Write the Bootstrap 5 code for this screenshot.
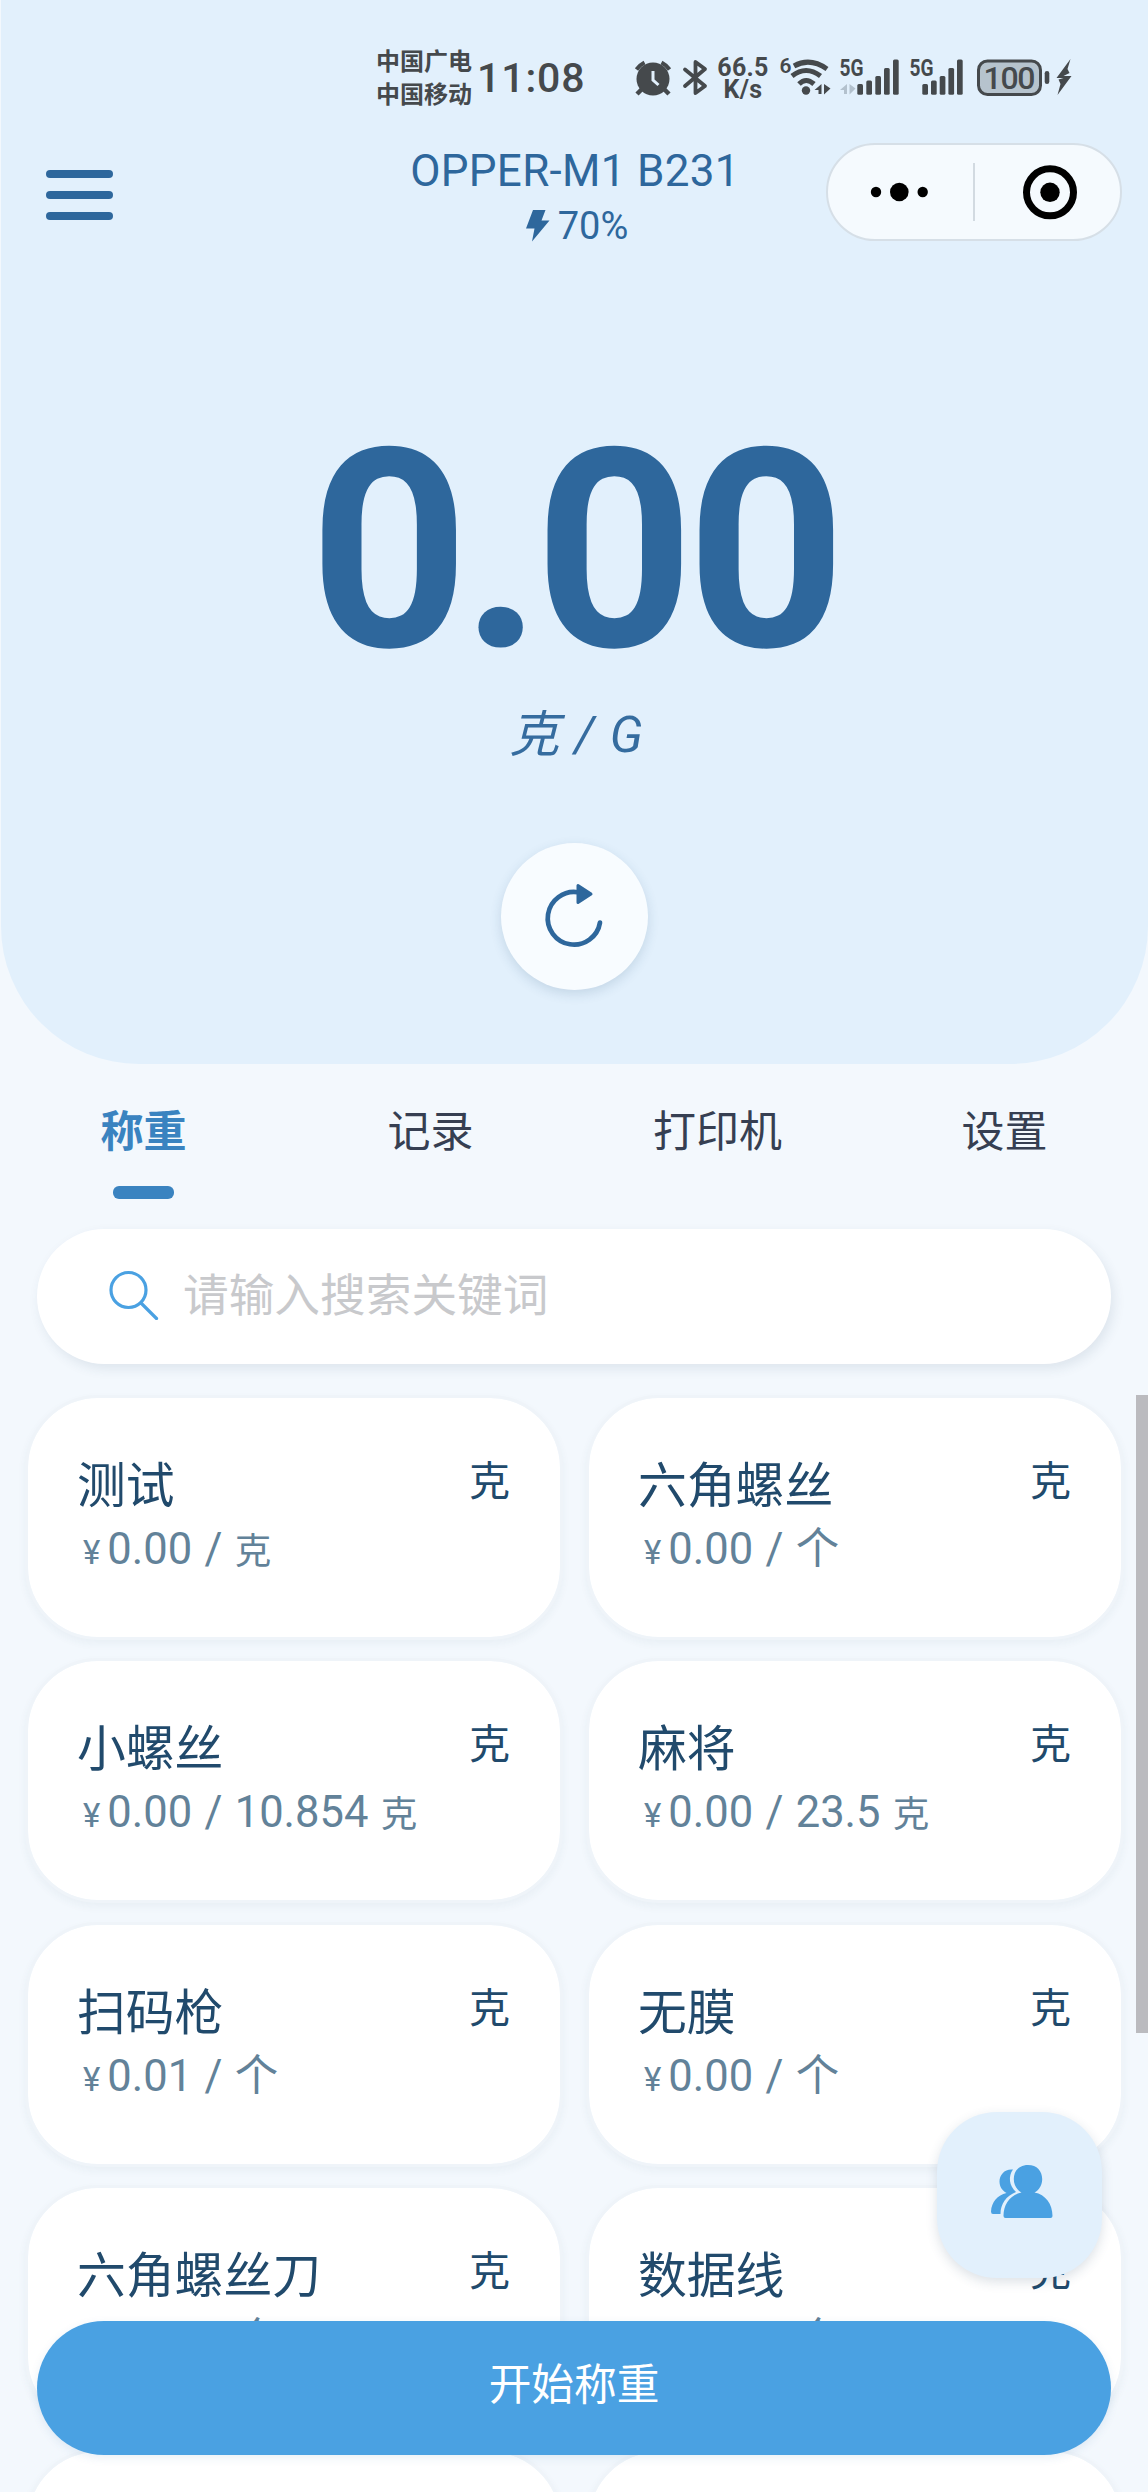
<!DOCTYPE html>
<html lang="zh-CN">
<head>
<meta charset="utf-8">
<meta name="viewport" content="width=device-width, initial-scale=1">
<title>OPPER-M1 B231</title>
<link href="https://cdn.jsdelivr.net/npm/bootstrap@5.3.0/dist/css/bootstrap.min.css" rel="stylesheet">
<style>
body{background:#f3f8fd;font-family:Roboto,"Noto Sans CJK SC",sans-serif;color:#214a6c}
svg{display:block;flex:none}
.screen{width:1148px;height:2492px}
.hero{height:1064px;margin-left:1px;background:#e2f0fc;border-radius:0 0 138px 138px;color:#2e679c}
/* system status bar */
.status{height:130px;padding:44px 0 0 375px;color:#45494c}
.carriers{font:700 24px/33px "Noto Sans CJK SC",sans-serif;width:96px;margin-top:-1px}
.clock{font-size:41px;line-height:68px;font-weight:500;margin-left:5px;width:108px;letter-spacing:.9px}
.speed{font-size:25px;line-height:22px;font-weight:700;width:56px;margin-left:7px;padding-top:13px;letter-spacing:.3px}
.status text{font-family:Roboto,sans-serif;fill:#45494c}
.sys-left{margin-left:49px}
.sys-right{margin-left:7px}
/* title bar */
.topbar{height:130px}
.menu-btn{width:67px;height:50px;margin:40px 0 0 45px}
.menu-btn span{height:8px;border-radius:4px;background:#2e679c}
.device{width:330px;margin-left:297px;padding-top:15px}
.device-name{font-size:44px;line-height:52px;white-space:nowrap;letter-spacing:.3px}
.battery{font-size:38px;line-height:48px;margin-top:5px;padding-left:4px}
.capsule{width:296px;height:98px;margin:13px 0 0 86px;background:#f5fafe;border:2px solid #d6dfe7;border-radius:49px}
/* reading */
.reading{font-size:278px;line-height:300px;font-weight:700;margin-top:141px;white-space:nowrap;letter-spacing:-7.5px;padding-right:1px}
.unit{font-size:50px;line-height:60px;font-style:italic;margin-top:4px;color:#356c9f;word-spacing:3px;padding-left:3px}
.tare{width:147px;height:147px;background:#f8fcff;box-shadow:0 4px 12px rgba(40,80,120,.16);margin-top:78px}
/* tabs */
.tabs{height:165px}
.tabs a{font-size:43px;line-height:64px;padding-top:36px;color:#363f52;text-decoration:none}
.tabs a.active{color:#3a83c0;font-weight:700}
.tabs i{width:61px;height:13px;border-radius:6px;background:#3a83c0;margin-top:22px}
.search{margin:0 37px;height:135px;border-radius:68px;background:#fff;box-shadow:3px 5px 12px rgba(40,70,100,.1);padding-left:72px}
.search svg{margin-top:-3px}
.search input{font-size:45.7px;border:0;padding:2px 0 0;margin-left:24px;background:transparent}
.search input::placeholder{color:#c8c9cc;opacity:1}
/* goods */
.goods{padding:31px 24px 0 25px;column-gap:23px;row-gap:18.4px;display:grid;grid-template-columns:1fr 1fr}
.good{height:245px;border:3px solid #eff4f9;border-radius:73px;background:#fff;box-shadow:0 4px 8px rgba(40,70,100,.05);padding:54px 50px 0 49px;background-clip:padding-box}
.good-name{font-size:48.8px;line-height:70px}
.good-unit{font-size:41px;line-height:60px}
.price{font-size:43.5px;line-height:60px;color:#628299;padding-left:6px;margin-top:-2px;white-space:pre;word-spacing:1.5px}
.price small{font-size:33px;margin-right:7px}
.price .ke{font-size:36.5px}
/* floating parts */
.start{left:37px;top:2321px;width:1074px;height:134px;border-radius:67px;background:#4aa1e2;color:#fff;font-size:42.7px;padding:0 0 5px;box-shadow:0 3px 10px rgba(40,100,160,.1)}
.start:hover{background:#4aa1e2;color:#fff}
.people{left:937px;top:2112px;width:165px;height:166px;border-radius:60px;background:#e2f0fc;box-shadow:0 4px 12px rgba(40,70,100,.16)}
.thumb{left:1136px;top:1395px;width:12px;height:638px;background:#bbbbbf}
</style>
<script src="https://cdn.jsdelivr.net/npm/bootstrap@5.3.0/dist/js/bootstrap.bundle.min.js"></script>
</head>
<body>
<main class="screen position-relative overflow-hidden">
  <header class="hero d-flex flex-column">
    <div class="status d-flex align-items-start">
      <div class="carriers">中国广电<br>中国移动</div>
      <div class="clock">11:08</div>
      <!-- alarm and bluetooth -->
      <svg class="sys-left" width="74" height="70" viewBox="634 44 74 70" fill="none" stroke="#45494c">
        <circle cx="653" cy="79" r="16.5" fill="#45494c" stroke="none"/>
        <path d="M636.5 69.500a22 22 0 0 1 8-7M669.500 69.500a22 22 0 0 0-8-7" stroke-width="4"/>
        <path d="M642 89l-5 5M664 89l5 5" stroke-width="4.500"/>
        <path d="M653 71v9l5.500 5" stroke="#e2f0fc" stroke-width="3"/>
        <path d="M685 69.500L705 86l-9.500 7V62l9.500 7-20 17" stroke-width="3.800" stroke-linejoin="round" stroke-linecap="round"/>
      </svg>
      <div class="speed text-center">66.5<br>K/s</div>
      <!-- wifi, two mobile signals, battery -->
      <svg class="sys-right" width="300" height="70" viewBox="778 44 300 70">
        <text x="779.500" y="73" font-size="21" font-weight="600">6</text>
        <g fill="none" stroke="#45494c" stroke-width="5">
          <path d="M794 66q16-9 33 3M792 76q14-11 28.500 0M799 84q7-7 15 0"/>
        </g>
        <circle cx="806" cy="90.500" r="4.200" fill="#45494c"/>
        <path d="M821.500 84v10h-3v-4h-4zM824 84v10.500l6.500-6z" fill="#45494c"/>
        <path d="M847 84v10h-3v-4h-4zM849.500 84v10.500l6-6z" fill="#b3c1cd"/>
        <text x="839.500" y="76" font-size="23" font-weight="700" textLength="24" lengthAdjust="spacingAndGlyphs">5G</text>
        <g fill="#45494c">
          <rect x="857.300" y="84" width="5.700" height="10.700" rx="1.500"/><rect x="866.300" y="80.500" width="5.700" height="14.200" rx="1.500"/><rect x="875.300" y="76" width="5.700" height="18.700" rx="1.500"/><rect x="884" y="68" width="5.700" height="26.700" rx="1.500"/><rect x="893" y="59.500" width="5.700" height="35.200" rx="1.500"/>
        </g>
        <text x="909.500" y="76" font-size="23" font-weight="700" textLength="24" lengthAdjust="spacingAndGlyphs">5G</text>
        <g fill="#45494c">
          <rect x="922.300" y="84" width="5.700" height="10.700" rx="1.500"/><rect x="931" y="80.500" width="5.700" height="14.200" rx="1.500"/><rect x="939.700" y="76" width="5.700" height="18.700" rx="1.500"/><rect x="948.400" y="68" width="5.700" height="26.700" rx="1.500"/><rect x="957" y="59.500" width="5.700" height="35.200" rx="1.500"/>
        </g>
        <rect x="978.500" y="61" width="62" height="33.500" rx="9" fill="#b6c3cd" stroke="#45494c" stroke-width="3"/>
        <text x="983.500" y="89.200" font-size="32" font-weight="500" textLength="52">100</text>
        <rect x="1044.700" y="71" width="4.600" height="13" rx="2.300" fill="#45494c"/>
        <path d="M1070.500 59l-14 19h7l-5 1.500 2 4.500-3 11 14-19h-8l6-3-2-4z" fill="#45494c"/>
      </svg>
    </div>
    <div class="topbar d-flex align-items-start">
      <div class="menu-btn d-flex flex-column justify-content-between"><span></span><span></span><span></span></div>
      <div class="device d-flex flex-column align-items-center">
        <div class="device-name">OPPER-M1 B231</div>
        <div class="battery d-flex align-items-center">
          <svg width="24" height="32" viewBox="0 0 24 32" class="me-2"><path d="M7 0h12.500l-4 10.500H23.500L6 31.500 8.500 18.500H0z" fill="#2e679c"/></svg>70%
        </div>
      </div>
      <div class="capsule">
        <svg width="292" height="94" viewBox="828 145 292 94">
          <circle cx="876" cy="192" r="5.200"/><circle cx="899.300" cy="192" r="9.300"/><circle cx="922.700" cy="192" r="5.200"/>
          <path d="M974 163v58" stroke="#d2dae1" stroke-width="2"/>
          <circle cx="1050" cy="192.300" r="23.500" fill="none" stroke="#000" stroke-width="7"/><circle cx="1050" cy="192.300" r="9.700"/>
        </svg>
      </div>
    </div>
    <div class="reading text-center">0.00</div>
    <div class="unit text-center">克 / G</div>
    <button class="tare btn border-0 rounded-circle p-0 mx-auto" aria-label="去皮">
      <svg width="147" height="147" viewBox="501 843 147 147">
        <path d="M600 922.500A26.300 26.300 0 1 1 578 892.300" fill="none" stroke="#2e679c" stroke-width="4.700" stroke-linecap="round"/>
        <path d="M578 885.500v17l13-8.500z" fill="#2e679c" stroke="#2e679c" stroke-width="3" stroke-linejoin="round"/>
      </svg>
    </button>
  </header>

  <nav class="tabs row g-0 row-cols-4">
    <a href="#" class="col active d-flex flex-column align-items-center">称重<i></i></a>
    <a href="#" class="col text-center">记录</a>
    <a href="#" class="col text-center">打印机</a>
    <a href="#" class="col text-center">设置</a>
  </nav>

  <div class="search d-flex align-items-center">
    <svg width="50" height="50" viewBox="0 0 50 50" fill="none" stroke="#4aa1e2" stroke-width="3.200" stroke-linecap="round"><circle cx="19.500" cy="20" r="17.500"/><path d="M32 33l15.500 15.500"/></svg>
    <input type="text" class="flex-grow-1" placeholder="请输入搜索关键词">
  </div>

  <section class="goods">
    <article class="good"><div class="d-flex justify-content-between"><div class="good-name">测试</div><div class="good-unit">克</div></div><div class="price"><small>¥</small>0.00 / <span class="ke">克</span></div></article>
    <article class="good"><div class="d-flex justify-content-between"><div class="good-name">六角螺丝</div><div class="good-unit">克</div></div><div class="price"><small>¥</small>0.00 / 个</div></article>
    <article class="good"><div class="d-flex justify-content-between"><div class="good-name">小螺丝</div><div class="good-unit">克</div></div><div class="price"><small>¥</small>0.00 / 10.854 <span class="ke">克</span></div></article>
    <article class="good"><div class="d-flex justify-content-between"><div class="good-name">麻将</div><div class="good-unit">克</div></div><div class="price"><small>¥</small>0.00 / 23.5 <span class="ke">克</span></div></article>
    <article class="good"><div class="d-flex justify-content-between"><div class="good-name">扫码枪</div><div class="good-unit">克</div></div><div class="price"><small>¥</small>0.01 / 个</div></article>
    <article class="good"><div class="d-flex justify-content-between"><div class="good-name">无膜</div><div class="good-unit">克</div></div><div class="price"><small>¥</small>0.00 / 个</div></article>
    <article class="good"><div class="d-flex justify-content-between"><div class="good-name">六角螺丝刀</div><div class="good-unit">克</div></div><div class="price"><small>¥</small>0.00 / 个</div></article>
    <article class="good"><div class="d-flex justify-content-between"><div class="good-name">数据线</div><div class="good-unit">克</div></div><div class="price"><small>¥</small>0.00 / 个</div></article>
    <article class="good"></article>
    <article class="good"></article>
  </section>

  <div class="thumb position-absolute"></div>
  <button class="people btn border-0 p-0 position-absolute" aria-label="客户">
    <svg width="165" height="166" viewBox="937 2112 165 166" fill="#4aa1e2">
      <path d="M1013 2169.500c-8-1-13.500 5-13.500 12 0 5 2.500 9 7 11.500-9 2-15 9-15.500 18.500q0 2.500 2 2.500h7.500c0-10 5.500-18 15.500-22-7-6-8-16-3-22.500z"/>
      <path d="M1028 2165c9 0 14.200 6.200 14.200 14 0 6-3 11-7.700 13.500 11 2 18 11.500 18 23.500q0 2-2 2h-45q-2 0-2-2c0-12 7-21.500 18-23.500-4.700-2.500-7.700-7.500-7.700-13.500 0-7.800 5.200-14 14.200-14z"/>
    </svg>
  </button>
  <button class="start btn border-0 position-absolute">开始称重</button>
</main>
</body>
</html>
